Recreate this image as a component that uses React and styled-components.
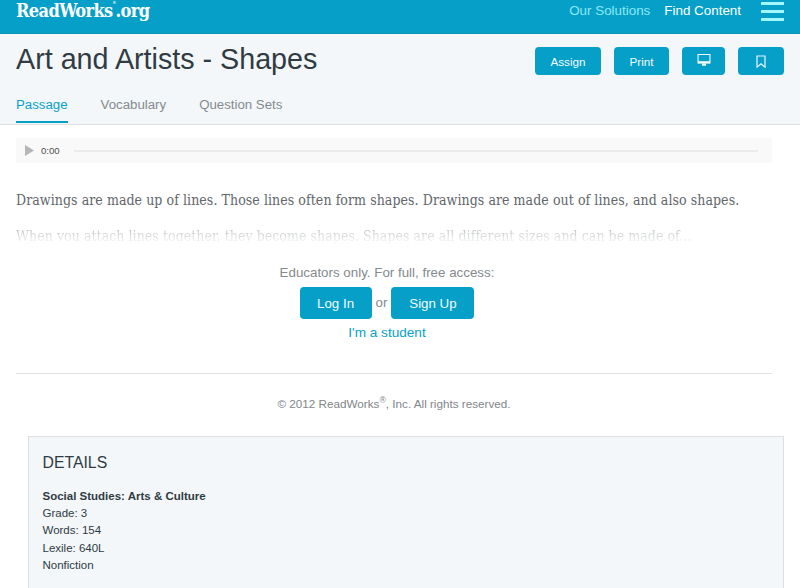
import styled, { createGlobalStyle } from "styled-components";

const GlobalStyle = createGlobalStyle`
  * {
    box-sizing: border-box;
  }
  body {
    margin: 0;
    background: #fff;
    color: #303b43;
    font-family: "Liberation Sans", Arial, sans-serif;
    overflow: hidden;
  }
`;

const Page = styled.div`
  height: 588px;
  overflow: hidden;
`;

const TopBar = styled.header`
  display: flex;
  justify-content: space-between;
  height: 34px;
  padding: 0 16px;
  background: #069fc8;
  border-bottom: 1px solid #0c93b9;
`;

const Logo = styled.div`
  display: flex;
  color: #fff;
  font-family: "DejaVu Serif Condensed", "DejaVu Serif", serif;
  font-stretch: condensed;
  font-weight: bold;
  font-size: 18px;
  line-height: 21px;
  letter-spacing: -0.6px;
`;

const Registered = styled.span`
  width: 3px;
  font-size: 4px;
  line-height: 6px;
  letter-spacing: 0;
`;

const Nav = styled.nav`
  display: flex;
`;

const NavItem = styled.a`
  margin-right: ${(props) => props.$gap}px;
  color: ${(props) => props.$color};
  font-size: 13.4px;
  line-height: 22px;
`;

const Burger = styled.div`
  display: flex;
  flex-direction: column;
  gap: 5px;
  width: 23px;
  padding-top: 2px;
`;

const BurgerLine = styled.span`
  height: 3px;
  background: #a5f6fa;
`;

const Heading = styled.section`
  height: 91px;
  padding: 0 16px;
  background: #f3f7f9;
  border-bottom: 1px solid #dbe0e2;
`;

const TitleRow = styled.div`
  display: flex;
  justify-content: space-between;
  height: 58px;
`;

const Title = styled.h1`
  margin: 0;
  padding-top: 9px;
  font-size: 28.7px;
  font-weight: normal;
  line-height: 32px;
`;

const Actions = styled.div`
  display: flex;
  gap: 13px;
  padding-top: 13px;
`;

const Button = styled.button`
  display: flex;
  align-items: center;
  justify-content: center;
  width: ${(props) => props.$width}px;
  height: ${(props) => props.$height || 28}px;
  padding: 0;
  border: 0;
  border-radius: 4px;
  background: #069fc8;
  color: #f3fbfd;
  font-family: inherit;
  font-size: ${(props) => props.$size || 11.7}px;
`;

const ScreenIcon = styled.svg`
  margin-bottom: 2px;
`;

const Tabs = styled.div`
  display: flex;
  gap: 33px;
`;

const Tab = styled.a`
  height: 31px;
  padding-top: 5px;
  border-bottom: 2px solid ${(props) => (props.$active ? "#069fc8" : "transparent")};
  color: ${(props) => (props.$active ? "#069fc8" : "#848a8e")};
  font-size: 13.25px;
  line-height: 16px;
`;

const Passage = styled.main`
  margin: 0 28px 0 16px;
  padding-top: 13px;
`;

const Player = styled.div`
  display: flex;
  align-items: center;
  height: 25px;
  padding: 0 14px 0 9px;
  background: #f9f9f9;
`;

const Time = styled.span`
  width: 33px;
  margin-left: 7px;
  color: #505050;
  font-size: 9.6px;
`;

const Track = styled.div`
  flex: 1;
  height: 2px;
  background: #ebebeb;
`;

const Story = styled.div`
  height: 94px;
  padding-top: 25px;
  color: #62666a;
  font-family: "DejaVu Serif Condensed", "DejaVu Serif", serif;
  font-stretch: condensed;
  font-size: 14px;
`;

const Line = styled.p`
  margin: 0 0 12px;
  line-height: 24px;
  white-space: nowrap;
  letter-spacing: ${(props) => props.$spacing}px;
`;

const FadedLine = styled(Line)`
  color: transparent;
  background: linear-gradient(#bfc1c2 20%, #fff 85%);
  background-clip: text;
`;

const Access = styled.div`
  display: flex;
  flex-direction: column;
  align-items: center;
  height: 116px;
  margin-right: 14px;
  padding-top: 8px;
  color: #848a8e;
  font-size: 13.35px;
  line-height: 16px;
`;

const AccessRow = styled.div`
  display: flex;
  align-items: center;
  gap: 4px;
  margin: 6px 0;
`;

const StudentLink = styled.a`
  color: #069fc8;
  font-size: 13.6px;
`;

const Copyright = styled.p`
  height: 63px;
  margin: 0;
  padding-top: 20px;
  border-top: 1px solid #dfe3e4;
  color: #7f868a;
  font-size: 11.7px;
  line-height: 20px;
  text-align: center;

  sup {
    font-size: 8.7px;
    line-height: 0;
  }
`;

const Details = styled.section`
  height: 170px;
  margin: 0 16px 0 28px;
  padding: 16px 14px 16px 13.5px;
  border: 1px solid #dbe0e2;
  background: #f3f7f9;
  font-size: 11.5px;
  line-height: 17.2px;
`;

const DetailsTitle = styled.h2`
  margin: 0 0 15px;
  font-size: 15.8px;
  font-weight: normal;
  line-height: 20px;
`;

const App = () => {
  return (
    <>
      <GlobalStyle />
      <Page>
        <TopBar>
          <Logo>
            ReadWorks<Registered>®</Registered>.org
          </Logo>
          <Nav>
            <NavItem $color="#8beaf5" $gap={14}>Our Solutions</NavItem>
            <NavItem $color="#fff" $gap={20}>Find Content</NavItem>
            <Burger>
              <BurgerLine />
              <BurgerLine />
              <BurgerLine />
            </Burger>
          </Nav>
        </TopBar>
        <Heading>
          <TitleRow>
            <Title>Art and Artists - Shapes</Title>
            <Actions>
              <Button $width={66}>Assign</Button>
              <Button $width={55}>Print</Button>
              <Button $width={43} aria-label="Present">
                <ScreenIcon width="14" height="12" viewBox="0 0 14 12">
                  <path d="M.5 0h13v9.6H.5z" fill="#f3fbfd" />
                  <path d="M1.6 1h10.8v6.2H1.6z" fill="#069fc8" />
                  <path d="M5 9.5h4v2.2H5z" fill="#f3fbfd" />
                </ScreenIcon>
              </Button>
              <Button $width={46} aria-label="Bookmark">
                <svg width="10" height="13" viewBox="0 0 10 13">
                  <path d="M1 1h8v11.2L5 8.9 1 12.2z" fill="none" stroke="#e6f8fc" strokeWidth="1.2" />
                </svg>
              </Button>
            </Actions>
          </TitleRow>
          <Tabs>
            <Tab $active>Passage</Tab>
            <Tab>Vocabulary</Tab>
            <Tab>Question Sets</Tab>
          </Tabs>
        </Heading>
        <Passage>
          <Player>
            <svg width="9" height="11" viewBox="0 0 9 11">
              <path d="M0 0l9 5.5L0 11z" fill="#b5b5b5" />
            </svg>
            <Time>0:00</Time>
            <Track />
          </Player>
          <Story>
            <Line $spacing={0.065}>
              Drawings are made up of lines. Those lines often form shapes. Drawings are made out of lines, and also shapes.
            </Line>
            <FadedLine $spacing={0.05}>
              When you attach lines together, they become shapes. Shapes are all different sizes and can be made of...
            </FadedLine>
          </Story>
          <Access>
            <span>Educators only. For full, free access:</span>
            <AccessRow>
              <Button $width={72} $height={32} $size={13.3}>Log In</Button>
              or
              <Button $width={83} $height={32} $size={13.3}>Sign Up</Button>
            </AccessRow>
            <StudentLink>I'm a student</StudentLink>
          </Access>
          <Copyright>
            © 2012 ReadWorks<sup>®</sup>, Inc. All rights reserved.
          </Copyright>
        </Passage>
        <Details>
          <DetailsTitle>DETAILS</DetailsTitle>
          <b>Social Studies: Arts &amp; Culture</b>
          <div>Grade: 3</div>
          <div>Words: 154</div>
          <div>Lexile: 640L</div>
          <div>Nonfiction</div>
        </Details>
      </Page>
    </>
  );
};

export default App;
